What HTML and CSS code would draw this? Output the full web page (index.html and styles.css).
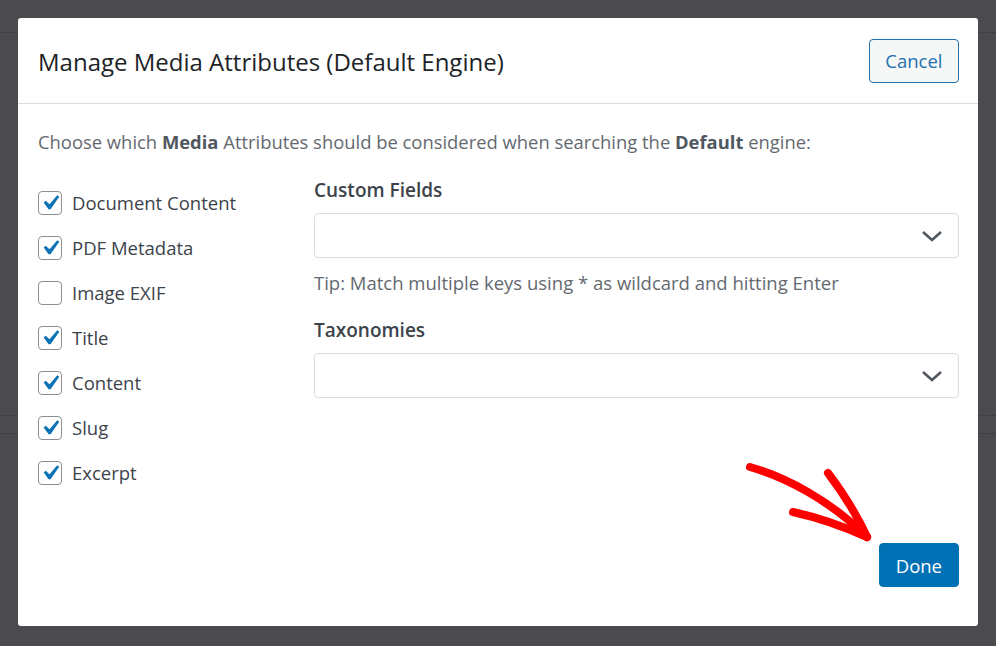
FILE: index.html
```html
<!DOCTYPE html>
<html lang="en">
<head>
    <meta charset="UTF-8">
    <meta name="viewport" content="width=device-width, initial-scale=1.0">
    <title>Manage Media Attributes</title>
    <link rel="stylesheet" href="styles.css">
</head>
<body>
    <div class="backdrop">
        <div class="modal">
            <div class="modal-header">
                <h2>Manage Media Attributes (Default Engine)</h2>
                <button class="btn btn-secondary">Cancel</button>
            </div>
            <div class="modal-body">
                <p class="intro">Choose which <strong>Media</strong> Attributes should be considered when searching the <strong>Default</strong> engine:</p>
                <div class="columns">
                    <ul class="attributes">
                        <li><span class="check on"></span>Document Content</li>
                        <li><span class="check on"></span>PDF Metadata</li>
                        <li><span class="check"></span>Image EXIF</li>
                        <li><span class="check on"></span>Title</li>
                        <li><span class="check on"></span>Content</li>
                        <li><span class="check on"></span>Slug</li>
                        <li><span class="check on"></span>Excerpt</li>
                    </ul>
                    <div class="fields">
                        <div class="field">
                            <label>Custom Fields</label>
                            <div class="select">
                                <svg width="22" height="12" viewBox="0 0 22 12"><path d="M2 2l9 8 9-8" fill="none" stroke="#50575e" stroke-width="2.6"/></svg>
                            </div>
                            <p class="tip">Tip: Match multiple keys using * as wildcard and hitting Enter</p>
                        </div>
                        <div class="field">
                            <label>Taxonomies</label>
                            <div class="select">
                                <svg width="22" height="12" viewBox="0 0 22 12"><path d="M2 2l9 8 9-8" fill="none" stroke="#50575e" stroke-width="2.6"/></svg>
                            </div>
                        </div>
                    </div>
                </div>
                <div class="modal-footer">
                    <button class="btn btn-primary">Done</button>
                </div>
            </div>
            <svg class="arrow" width="140" height="90" viewBox="0 0 140 90">
                <path d="M10 12 C45 22 90 45 127 82" fill="none" stroke="#ff0000" stroke-width="8" stroke-linecap="round"/>
                <path d="M53 57 C80 63 105 72 127 82" fill="none" stroke="#ff0000" stroke-width="8" stroke-linecap="round"/>
                <path d="M88 18 C103 38 117 60 127 82" fill="none" stroke="#ff0000" stroke-width="8" stroke-linecap="round"/>
            </svg>
        </div>
    </div>
</body>
</html>
```

FILE: styles.css
```css
* {
    box-sizing: border-box;
}
body {
    margin: 0;
    font-family: 'Open Sans', 'Noto Sans', sans-serif;
    background: #4b4b4f;
}
.backdrop {
    height: 646px;
    padding: 18px;
    background:
        linear-gradient(#3f4044, #3f4044) 0 32px / 100% 1px no-repeat,
        linear-gradient(#3f4044, #3f4044) 0 415px / 100% 1px no-repeat,
        linear-gradient(#3f4044, #3f4044) 0 433px / 100% 1px no-repeat,
        #4b4b4f;
}
.modal {
    position: relative;
    width: 960px;
    height: 608px;
    background: #fff;
    border-radius: 3px;
    display: flex;
    flex-direction: column;
}
.modal-header {
    height: 86px;
    padding: 0 19px 0 20px;
    display: flex;
    align-items: center;
    justify-content: space-between;
    border-bottom: 1px solid #dcdcde;

    h2 {
        margin: 0;
        font-size: 24px;
        font-weight: 400;
        color: #1d2327;
        position: relative;
        top: 1px;
    }
}
.btn {
    font-family: inherit;
    font-size: 18.5px;
    height: 44px;
    padding: 0 15.5px;
    border-radius: 4px;
    cursor: pointer;
}
.btn-secondary {
    color: #2271b1;
    background: #f6f7f7;
    border: 1px solid #2271b1;
}
.btn-primary {
    color: #fff;
    background: #0071b5;
    border: 1px solid #0071b5;
    padding: 0 16px;
}
.modal-body {
    flex: 1;
    padding: 24px 19px 39px 20px;
    display: flex;
    flex-direction: column;
}
.intro {
    margin: 0 0 25px;
    font-size: 18.4px;
    line-height: 27px;
    color: #646970;

    strong {
        color: #50575e;
    }
}
.columns {
    display: flex;
}
.attributes {
    list-style: none;
    margin: 0;
    padding: 0;
    width: 276px;

    li {
        display: flex;
        align-items: center;
        gap: 10px;
        height: 45px;
        font-size: 18.5px;
        color: #3c434a;
    }
}
.check {
    flex: none;
    width: 24px;
    height: 24px;
    border: 1px solid #8c8f94;
    border-radius: 4px;
    background: #fff;
}
.check.on {
    background: #fff url("data:image/svg+xml;utf8,<svg xmlns='http://www.w3.org/2000/svg' viewBox='0 0 20 20'><path d='M14.83 4.89l1.34.94-5.81 8.38H9.02L5.78 9.67l1.34-1.25 2.57 2.4z' fill='%230a72b5'/></svg>") center / 30px 30px no-repeat;
}
.fields {
    flex: 1;
}
.field {
    label {
        display: block;
        font-size: 19px;
        font-weight: 600;
        color: #3c434a;
        line-height: 24px;
        margin: -2px 0 11px;
    }
}
.select {
    height: 45px;
    border: 1px solid #dcdcde;
    border-radius: 4px;
    display: flex;
    align-items: center;
    justify-content: flex-end;
    padding-right: 15px;
}
.tip {
    margin: 12px 0 25px;
    font-size: 18.5px;
    line-height: 25px;
    color: #646970;
}
.modal-footer {
    margin-top: auto;
    display: flex;
    justify-content: flex-end;
}
.arrow {
    position: absolute;
    left: 722px;
    top: 437px;
}
```
